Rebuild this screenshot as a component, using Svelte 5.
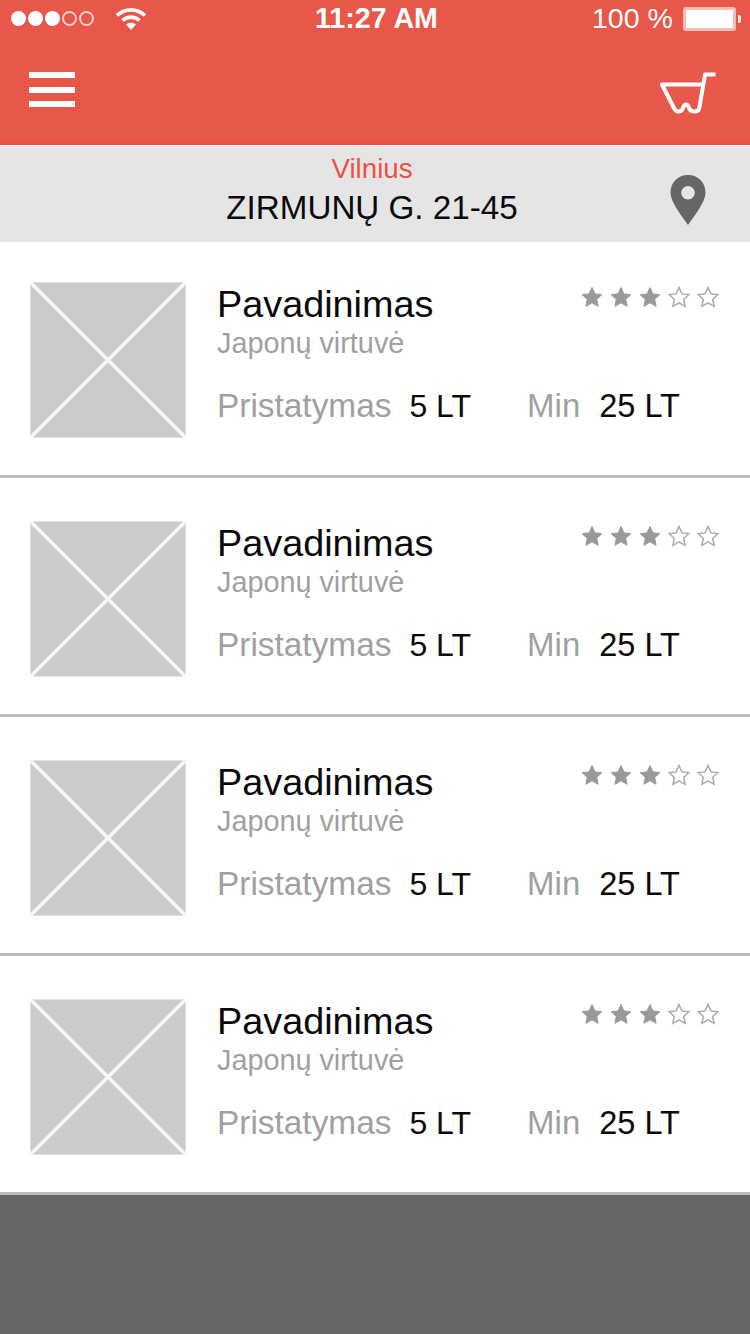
<script>
  const items = [1, 2, 3, 4].map(() => ({
    name: 'Pavadinimas',
    kitchen: 'Japonų virtuvė',
    delivery: '5 LT',
    min: '25 LT',
    rating: 3
  }));
  const star = 'M11 1.5l2.9 6.4 6.9.8-5.1 4.7 1.4 6.9L11 16.8l-6.1 3.5 1.4-6.9L1.2 8.7l6.9-.8z';
</script>

<div class="screen">
  <header class="topbar">
    <div class="status">
      <div class="signal">
        {#each [1, 2, 3] as _}<span class="dot"></span>{/each}
        {#each [1, 2] as _}<span class="dot empty"></span>{/each}
      </div>
      <svg class="wifi" width="32" height="24" viewBox="0 0 32 24" fill="none" stroke="#fff" stroke-width="3.600">
        <path d="M2 9.500C10 2 22 2 30 9.500" />
        <path d="M7.500 14.500C12.500 10 19.500 10 24.500 14.500" />
        <path d="M16 24l-5-5.500c3-2.200 7-2.200 10 0z" fill="#fff" stroke="none" />
      </svg>
      <span class="time">11:27 AM</span>
      <span class="percent">100 %</span>
      <svg class="battery" width="60" height="24" viewBox="0 0 60 24">
        <rect x="1" y="0" width="53" height="24" rx="3" fill="#fff" fill-opacity="0.6" />
        <rect x="4" y="3" width="47" height="18" fill="#fff" />
        <path d="M56 8h1a2 2 0 0 1 2 2v4a2 2 0 0 1-2 2h-1z" fill="#fff" fill-opacity="0.85" />
      </svg>
    </div>
    <div class="actions">
      <div class="burger"><span></span><span></span><span></span></div>
      <svg class="cart" width="56" height="44" viewBox="0 0 56 44" fill="none" stroke="#fff" stroke-width="4" stroke-linejoin="round">
        <path d="M55.500 3.500H45L39.500 36Q39 40.500 34.500 40.500 30 40.500 29 37 28 33.500 26 33.500 24 33.500 23 37 22 40.500 18.500 40.500 15.500 40.500 14 37L2 13.500H43" />
      </svg>
    </div>
  </header>

  <section class="location">
    <div class="address">
      <div class="city">Vilnius</div>
      <div class="street">ZIRMUNŲ G. 21-45</div>
    </div>
    <svg class="pin" width="36" height="50" viewBox="0 0 36 50">
      <path fill-rule="evenodd" fill="#666" d="M18 0C8 0 .5 7.500.5 17.500.5 27 11 40 18 50c7-10 17.500-23 17.500-32.500C35.500 7.500 28 0 18 0zm0 11a6.800 6.800 0 1 1 0 13.600A6.800 6.800 0 0 1 18 11z" />
    </svg>
  </section>

  <main class="list">
    {#each items as item}
      <article class="row">
        <svg class="thumb" width="156" height="156" viewBox="0 0 156 156">
          <rect x="0.500" y="0.500" width="155" height="155" fill="#cbcbcb" stroke="#e2e2e2" />
          <path d="M0 0L156 156M156 0L0 156" stroke="#f7f7f7" stroke-width="3.500" />
        </svg>
        <div class="info">
          <div class="head">
            <div class="name">{item.name}</div>
            <div class="stars">
              {#each [1, 2, 3, 4, 5] as n}
                <svg width="22" height="22" viewBox="0 0 22 22">
                  {#if n <= item.rating}
                    <path d={star} fill="#999" stroke="#999" stroke-width="1" />
                  {:else}
                    <path d={star} fill="none" stroke="#aaa" stroke-width="1.500" />
                  {/if}
                </svg>
              {/each}
            </div>
          </div>
          <div class="kitchen">{item.kitchen}</div>
          <div class="meta">
            <span class="label">Pristatymas</span>
            <span class="value">{item.delivery}</span>
            <span class="label min">Min</span>
            <span class="value total">{item.min}</span>
          </div>
        </div>
      </article>
    {/each}
  </main>

  <footer class="bottom"></footer>
</div>

<style>
  :global(body) {
    margin: 0;
    background: #fff;
  }
  .screen {
    width: 750px;
    height: 1334px;
    display: flex;
    flex-direction: column;
    overflow: hidden;
    font-family: 'Liberation Sans', Arial, sans-serif;
  }
  .topbar {
    height: 143px;
    background: #e7574a;
    border-bottom: 2px solid #ea4f43;
    color: #fff;
  }
  .status {
    display: flex;
    align-items: center;
    height: 37px;
    padding-left: 11px;
  }
  .signal {
    display: flex;
    gap: 2px;
    width: 104px;
  }
  .dot {
    width: 15px;
    height: 15px;
    border-radius: 50%;
    background: #fff;
  }
  .dot.empty {
    box-sizing: border-box;
    background: none;
    border: 2px solid #f6cfca;
  }
  .wifi {
    margin-top: -2px;
  }
  .time {
    margin-left: 168px;
    width: 277px;
    font-size: 28.600px;
    font-weight: 700;
  }
  .percent {
    font-size: 28.500px;
    width: 90px;
  }
  .actions {
    display: flex;
    justify-content: space-between;
    align-items: center;
    height: 106px;
    padding: 0 34px 0 29px;
  }
  .burger {
    display: flex;
    flex-direction: column;
    gap: 8.500px;
    margin-top: -1px;
  }
  .burger span {
    width: 46px;
    height: 6px;
    background: #fff;
  }
  .cart {
    margin-top: 6px;
  }
  .location {
    margin-top: 1px;
    height: 96px;
    background: #e5e5e5;
    display: flex;
    align-items: center;
    padding-right: 44px;
  }
  .address {
    flex: 1;
    padding-left: 74px;
    text-align: center;
    margin-top: -6px;
  }
  .city {
    font-size: 27.700px;
    line-height: 30px;
    margin-bottom: 4px;
    color: #ec5044;
  }
  .street {
    font-size: 33.200px;
    line-height: 40px;
    color: #0a0a0a;
  }
  .pin {
    margin-top: 11px;
  }
  .list {
    display: flex;
    flex-direction: column;
    background: #fff;
  }
  .row {
    display: flex;
    padding: 43px 30px 37px 30px;
    border-bottom: 3px solid #bdbdbd;
  }
  .row:first-child {
    padding-top: 40px;
  }
  .thumb {
    flex: none;
  }
  .info {
    flex: 1;
    margin-left: 31px;
  }
  .head {
    display: flex;
    justify-content: space-between;
    align-items: flex-start;
    height: 44px;
  }
  .name {
    font-size: 37.800px;
    line-height: 44px;
    color: #0a0a0a;
  }
  .stars {
    display: flex;
    gap: 7px;
    margin-top: 4px;
    margin-right: 1px;
  }
  .kitchen {
    font-size: 28.800px;
    line-height: 34px;
    color: #a0a0a0;
  }
  .meta {
    display: flex;
    align-items: baseline;
    margin-top: 26px;
    font-size: 33.400px;
    line-height: 40px;
  }
  .label {
    color: #a0a0a0;
  }
  .value {
    font-size: 32px;
    color: #0a0a0a;
    margin-left: 18px;
  }
  .value.total {
    font-size: 32.500px;
    margin-left: 19px;
  }
  .label.min {
    font-size: 33px;
    margin-left: 56px;
  }
  .bottom {
    flex: 1;
    background: #666;
  }
</style>
